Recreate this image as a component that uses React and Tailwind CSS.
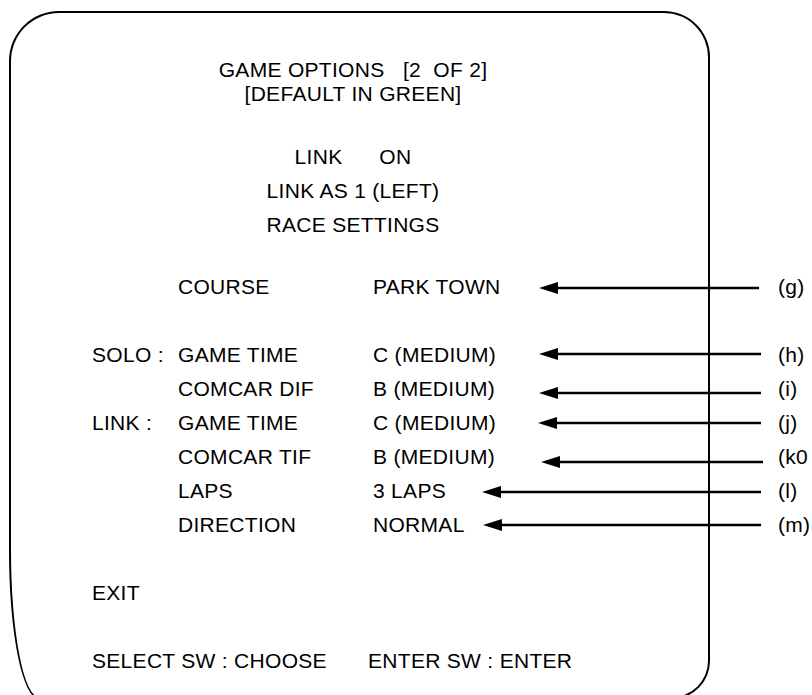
import React from 'react';

const rows = [
  { prefix: 'SOLO :', label: 'GAME TIME', value: 'C (MEDIUM)', tip: 539, end: 761, dy: 16, tag: '(h)' },
  { prefix: '', label: 'COMCAR DIF', value: 'B (MEDIUM)', tip: 539, end: 761, dy: 21, tag: '(i)' },
  { prefix: 'LINK :', label: 'GAME TIME', value: 'C (MEDIUM)', tip: 538, end: 761, dy: 17, tag: '(j)' },
  { prefix: '', label: 'COMCAR TIF', value: 'B (MEDIUM)', tip: 541, end: 763, dy: 22, tag: '(k0' },
  { prefix: '', label: 'LAPS', value: '3 LAPS', tip: 482, end: 761, dy: 18, tag: '(l)' },
  { prefix: '', label: 'DIRECTION', value: 'NORMAL', tip: 483, end: 761, dy: 17, tag: '(m)' },
];

// box inner edge sits at x=11, so arrow coords are shifted by that
function Arrow({ tip, end, dy }) {
  const w = end - tip;
  return (
    <svg
      className="absolute"
      style={{ left: tip - 11, top: dy - 7 }}
      width={w}
      height={14}
      viewBox={`0 0 ${w} 14`}
    >
      <line x1="16" y1="7" x2={w} y2="7" stroke="black" strokeWidth="2.6" />
      <polygon points="0,7 19,1 19,13" fill="black" />
    </svg>
  );
}

function Row({ prefix, label, value, tip, end, dy, tag }) {
  return (
    <div className="relative h-[34px] leading-[34px] grid grid-cols-[86px_195px_1fr] pl-[81px] whitespace-pre">
      <span>{prefix}</span>
      <span>{label}</span>
      <span>{value}</span>
      {tip && <Arrow tip={tip} end={end} dy={dy} />}
      {tag && <span className="absolute left-[767px] top-0">{tag}</span>}
    </div>
  );
}

export default function App() {
  return (
    <div className="h-[695px] w-[812px] overflow-hidden bg-white">
      <div
        className="ml-[9px] mt-[11px] w-[701px] h-[688px] border-[2.5px] border-black rounded-tl-[50px] rounded-tr-[46px] rounded-br-[38px] rounded-bl-[30px_148px] text-black text-[21px] tracking-[0.3px]"
        style={{ fontFamily: '"Liberation Sans", Arial, sans-serif' }}
      >
        <div className="pt-[45px] pr-[13px] flex flex-col items-center whitespace-pre">
          <div className="leading-[24px]">GAME OPTIONS   [2  OF 2]</div>
          <div className="leading-[24px]">[DEFAULT IN GREEN]</div>
          <div className="mt-[34px] leading-[34px]">LINK      ON</div>
          <div className="leading-[34px]">LINK AS 1 (LEFT)</div>
          <div className="leading-[34px]">RACE SETTINGS</div>
        </div>

        <div className="mt-[28px]">
          <Row label="COURSE" value="PARK TOWN" tip={539} end={759} dy={18} tag="(g)" />
        </div>

        <div className="mt-[34px]">
          {rows.map((r, i) => (
            <Row key={i} {...r} />
          ))}
        </div>

        <div className="mt-[34px] h-[34px] leading-[34px] pl-[81px]">EXIT</div>

        <div className="mt-[34px] h-[34px] leading-[34px] pl-[81px] flex whitespace-pre">
          <span className="w-[276px]">SELECT SW : CHOOSE</span>
          <span>ENTER SW : ENTER</span>
        </div>
      </div>
    </div>
  );
}
